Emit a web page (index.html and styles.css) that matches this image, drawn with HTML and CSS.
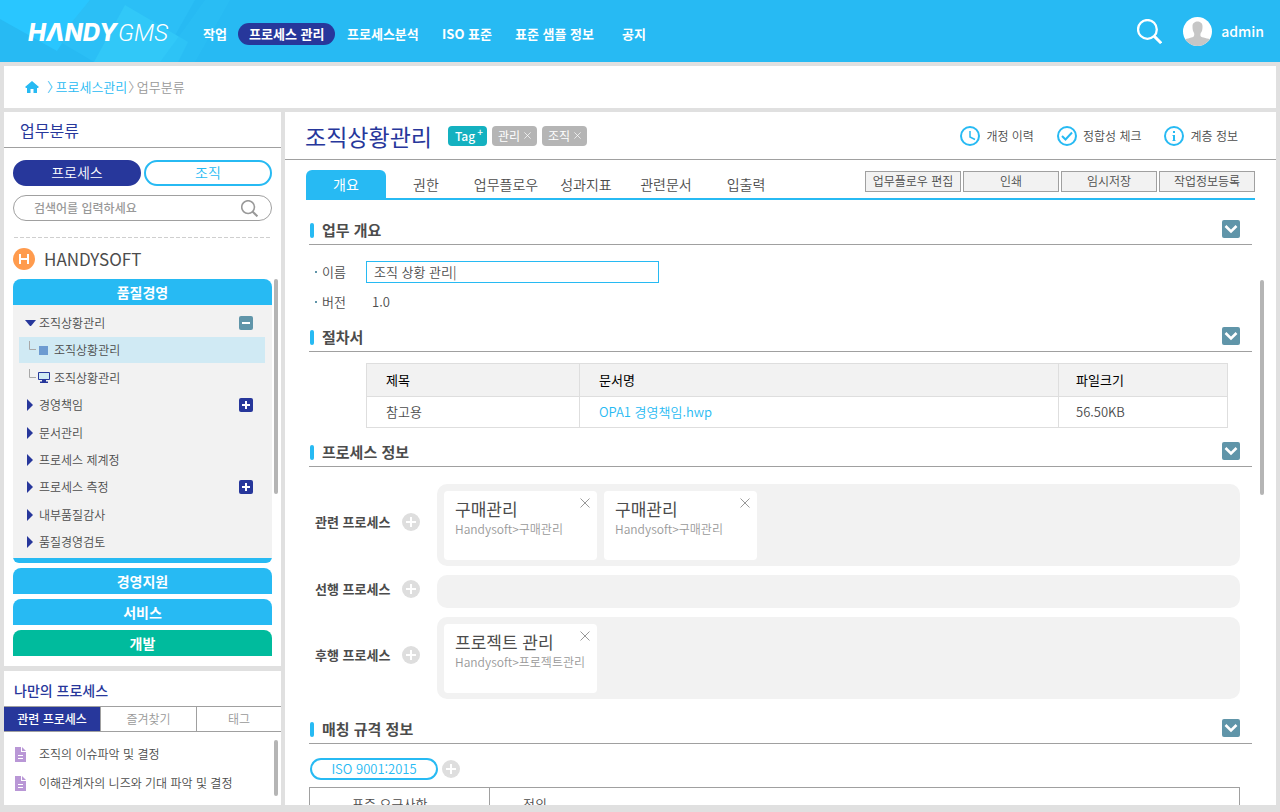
FILE: index.html
```html
<!DOCTYPE html>
<html lang="ko">
<head>
<meta charset="utf-8">
<title>HANDY GMS</title>
<link rel="stylesheet" href="styles.css">
</head>
<body>
<svg class="sprite" width="0" height="0" aria-hidden="true">
  <symbol id="chevron" viewBox="0 0 18 18"><path d="M3.500 6l5.500 5.500L14.500 6" fill="none" stroke="#fff" stroke-width="2.600"/></symbol>
  <symbol id="plus-round" viewBox="0 0 18 18"><circle cx="9" cy="9" r="9" fill="#dedede"/><path d="M9 4v10M4 9h10" stroke="#fff" stroke-width="2"/></symbol>
  <symbol id="cross" viewBox="0 0 10 10"><path d="M.5.5l9 9M9.5.5l-9 9" fill="none" stroke="currentColor"/></symbol>
  <symbol id="doc" viewBox="0 0 11 15"><path d="M0 0h6v5h5v10H0z" fill="#b997d6"/><path d="M7 0l4 4H7z" fill="#b997d6"/><path d="M3 8.500h5M3 11.500h5" stroke="#fff"/></symbol>
  <symbol id="search" viewBox="0 0 24 24"><circle cx="10" cy="10" r="9" fill="none" stroke="currentColor" stroke-width="2.200"/><path d="M16.200 16.200l7 7" stroke="currentColor" stroke-width="2.800"/></symbol>
  <symbol id="elbow" viewBox="0 0 8 10"><path d="M1.500 0v8.500H8" fill="none" stroke="#a8a8a8"/></symbol>
</svg>

<header class="topbar">
  <svg class="topbar-art" width="230" height="62" viewBox="0 0 230 62" aria-hidden="true">
    <path d="M0 0H90L57 51 0 19z" fill="#29c6ff"/>
    <path d="M90 0H195L160 62H94L57 40z" fill="#2bbff6"/>
    <path d="M125 5L188 42 178 62H94z" fill="#31c8f8"/>
    <path d="M188 24L205 0h25L195 62h-35z" fill="#2bc0f5" opacity=".6"/>
  </svg>
  <a class="logo" href="#" aria-label="HANDY GMS"><span class="logo-strong">HΛNDY</span><span class="logo-light">GMS</span></a>
  <nav class="mainnav">
    <a href="#">작업</a>
    <a href="#" class="current">프로세스 관리</a>
    <a href="#">프로세스분석</a>
    <a href="#">ISO 표준</a>
    <a href="#">표준 샘플 정보</a>
    <a href="#">공지</a>
  </nav>
  <div class="user">
    <button class="bare" aria-label="검색"><svg width="25" height="25"><use href="#search"/></svg></button>
    <svg width="29" height="29" viewBox="0 0 29 29" aria-hidden="true">
      <clipPath id="face"><circle cx="14.500" cy="14.500" r="14.500"/></clipPath>
      <circle cx="14.500" cy="14.500" r="14.500" fill="#fff"/>
      <g clip-path="url(#face)" fill="#c6c6c6"><path d="M9.500 9c0-6 10-6 10 0 0 2 0 4-1 6-1 1-1.200 2-1 4 1 2 8 2 11 4v8H1v-8c3-2 9-2 10-4 .5-2 .3-3-.5-4-1-2-1-4-1-6z"/></g>
    </svg>
    <span>admin</span>
  </div>
</header>

<div class="crumbs">
  <svg width="14" height="12" viewBox="0 0 14 12" aria-hidden="true"><path d="M7 0l7 6-1.200 1H12v5H8.500V8h-3v4H2V7h-.8L0 6z" fill="#27baf3"/></svg>
  <span class="sep sep-on">〉</span><a href="#">프로세스관리</a><span class="sep">〉</span><span>업무분류</span>
</div>

<div class="workspace">
  <aside class="side">
    <section class="panel tree-panel">
      <h2>업무분류</h2>
      <div class="tree-body">
        <div class="switch">
          <button class="pill pill-on">프로세스</button>
          <button class="pill">조직</button>
        </div>
        <label class="search">
          <input type="text" placeholder="검색어를 입력하세요" aria-label="검색어">
          <svg width="17" height="17" aria-hidden="true"><use href="#search"/></svg>
        </label>
        <svg class="dashes" height="1" aria-hidden="true"><path d="M1 .5H900" stroke="#cfcfcf" stroke-dasharray="4 2"/></svg>
        <div class="company">
          <svg width="22" height="22" viewBox="0 0 22 22" aria-hidden="true"><circle cx="11" cy="11" r="11" fill="#ff9b4d"/><path d="M7 6v10M15 6v10M7 11h8" stroke="#fff" stroke-width="2"/></svg>
          <span>HANDYSOFT</span>
        </div>
        <div class="accordion">
          <button class="bar">품질경영</button>
          <ul class="tree">
            <li><i class="down"></i><span>조직상황관리</span>
              <button class="mini muted" aria-label="접기"><svg width="14" height="14"><path d="M3 7h8" stroke="#fff" stroke-width="2"/></svg></button></li>
            <li class="child selected"><svg width="8" height="10"><use href="#elbow"/></svg><i class="square"></i><span>조직상황관리</span></li>
            <li class="child"><svg width="8" height="10"><use href="#elbow"/></svg><svg class="monitor" width="12" height="11" viewBox="0 0 12 11"><path d="M.5.5h11v7H.5z" fill="#d0eaf4" stroke="#27379b"/><path d="M4 8h4v1.500h2V11H2V9.500h2z" fill="#27379b"/></svg><span>조직상황관리</span></li>
            <li><i class="right"></i><span>경영책임</span>
              <button class="mini" aria-label="펼치기"><svg width="14" height="14"><path d="M3 7h8M7 3v8" stroke="#fff" stroke-width="2"/></svg></button></li>
            <li><i class="right"></i><span>문서관리</span></li>
            <li><i class="right"></i><span>프로세스 제계정</span></li>
            <li><i class="right"></i><span>프로세스 측정</span>
              <button class="mini" aria-label="펼치기"><svg width="14" height="14"><path d="M3 7h8M7 3v8" stroke="#fff" stroke-width="2"/></svg></button></li>
            <li><i class="right"></i><span>내부품질감사</span></li>
            <li><i class="right"></i><span>품질경영검토</span></li>
          </ul>
          <div class="thumb tree-thumb"></div>
        </div>
        <button class="bar">경영지원</button>
        <button class="bar">서비스</button>
        <button class="bar green">개발</button>
      </div>
    </section>

    <section class="panel my-panel">
      <h3>나만의 프로세스</h3>
      <div class="my-tabs">
        <button class="on">관련 프로세스</button>
        <button>즐겨찾기</button>
        <button>태그</button>
      </div>
      <ul class="docs">
        <li><svg width="11" height="15"><use href="#doc"/></svg><a href="#">조직의 이슈파악 및 결정</a></li>
        <li><svg width="11" height="15"><use href="#doc"/></svg><a href="#">이해관계자의 니즈와 기대 파악 및 결정</a></li>
      </ul>
      <div class="thumb my-thumb"></div>
    </section>
  </aside>

  <main class="panel content">
    <div class="title-row">
      <h1>조직상황관리</h1>
      <button class="tag tag-add">Tag<sup>+</sup></button>
      <button class="tag">관리<svg width="7" height="7"><use href="#cross"/></svg></button>
      <button class="tag">조직<svg width="7" height="7"><use href="#cross"/></svg></button>
      <div class="links">
        <a href="#"><svg width="20" height="20" fill="none" stroke="#27baf3" stroke-width="2"><circle cx="10" cy="10" r="9"/><path d="M10 5v6l5 2.500" stroke-width="1.500"/></svg>개정 이력</a>
        <a href="#"><svg width="20" height="20" fill="none" stroke="#27baf3" stroke-width="2"><circle cx="10" cy="10" r="9"/><path d="M5 10l3.500 3.500 6.500-7"/></svg>정합성 체크</a>
        <a href="#"><svg width="20" height="20" fill="none" stroke="#27baf3" stroke-width="2"><circle cx="10" cy="10" r="9"/><path d="M10 5v2M10 9v6" /><path d="M8.500 9.500H10M8.500 14.500h3" stroke-width="1"/></svg>계층 정보</a>
      </div>
    </div>

    <div class="tabs-row">
      <nav class="tabs">
        <a href="#" class="active">개요</a><a href="#">권한</a><a href="#">업무플로우</a><a href="#">성과지표</a><a href="#">관련문서</a><a href="#">입출력</a>
      </nav>
      <div class="actions">
        <button>업무플로우 편집</button><button>인쇄</button><button>임시저장</button><button>작업정보등록</button>
      </div>
    </div>

    <section class="block">
      <div class="block-head"><h2>업무 개요</h2><button class="toggle" aria-label="접기"><svg width="18" height="18"><use href="#chevron"/></svg></button></div>
      <div class="fields">
        <label for="name">이름</label><input id="name" type="text" value="조직 상황 관리|" spellcheck="false">
        <span class="label">버전</span><span class="value">1.0</span>
      </div>
    </section>

    <section class="block">
      <div class="block-head"><h2>절차서</h2><button class="toggle" aria-label="접기"><svg width="18" height="18"><use href="#chevron"/></svg></button></div>
      <div class="files-wrap">
        <table class="files">
          <thead><tr><th class="c-title">제목</th><th>문서명</th><th class="c-size">파일크기</th></tr></thead>
          <tbody><tr><td>참고용</td><td><a href="#">OPA1 경영책임.hwp</a></td><td>56.50KB</td></tr></tbody>
        </table>
      </div>
    </section>

    <section class="block">
      <div class="block-head"><h2>프로세스 정보</h2><button class="toggle" aria-label="접기"><svg width="18" height="18"><use href="#chevron"/></svg></button></div>
      <div class="relations">
        <div class="relation">
          <span class="rel-name">관련 프로세스</span>
          <button class="bare" aria-label="추가"><svg width="18" height="18"><use href="#plus-round"/></svg></button>
          <div class="tray">
            <div class="card"><strong>구매관리</strong><span>Handysoft&gt;구매관리</span><button class="bare close" aria-label="삭제"><svg width="10" height="10"><use href="#cross"/></svg></button></div>
            <div class="card"><strong>구매관리</strong><span>Handysoft&gt;구매관리</span><button class="bare close" aria-label="삭제"><svg width="10" height="10"><use href="#cross"/></svg></button></div>
          </div>
        </div>
        <div class="relation">
          <span class="rel-name">선행 프로세스</span>
          <button class="bare" aria-label="추가"><svg width="18" height="18"><use href="#plus-round"/></svg></button>
          <div class="tray"></div>
        </div>
        <div class="relation">
          <span class="rel-name">후행 프로세스</span>
          <button class="bare" aria-label="추가"><svg width="18" height="18"><use href="#plus-round"/></svg></button>
          <div class="tray">
            <div class="card"><strong>프로젝트 관리</strong><span>Handysoft&gt;프로젝트관리</span><button class="bare close" aria-label="삭제"><svg width="10" height="10"><use href="#cross"/></svg></button></div>
          </div>
        </div>
      </div>
    </section>

    <section class="block">
      <div class="block-head"><h2>매칭 규격 정보</h2><button class="toggle" aria-label="접기"><svg width="18" height="18"><use href="#chevron"/></svg></button></div>
      <div class="standards">
        <button class="standard">ISO 9001:2015</button>
        <button class="bare" aria-label="추가"><svg width="18" height="18"><use href="#plus-round"/></svg></button>
      </div>
      <table class="reqs"><tbody><tr><td class="c-req">표준 요구사항</td><td>정의</td></tr></tbody></table>
    </section>
    <div class="thumb main-thumb"></div>
  </main>
</div>
</body>
</html>
```

FILE: styles.css
```css
* { box-sizing: border-box; }

body {
  margin: 0;
  height: 100vh;
  display: flex;
  flex-direction: column;
  overflow: hidden;
  background: #e0e0e0;
  color: #4c4c4c;
  font: 350 13px/20px "Noto Sans CJK KR", sans-serif;
}

h1, h2, h3, ul { margin: 0; padding: 0; }
h1, h2 { font-weight: 400; }
ul { list-style: none; }
a { color: inherit; text-decoration: none; }
svg { display: block; flex: none; }
button, input { font: inherit; color: inherit; margin: 0; padding: 0; border: 0; background: none; outline: 0; }
i { flex: none; }
.sprite { position: absolute; }
.bare { display: block; }

/* Top bar */
.topbar {
  position: relative;
  flex: none;
  height: 62px;
  padding: 0 16px 0 28px;
  display: flex;
  align-items: center;
  background: #27baf3;
  color: #fff;
}
.topbar-art { position: absolute; left: 0; top: 0; }
.logo {
  position: relative;
  width: 175px;
  padding-top: 3px;
  display: flex;
  gap: 1px;
  font: italic 24px/28px Inter, sans-serif;
}
.logo-strong { font-weight: 800; }
.logo-light { font-family: Roboto, sans-serif; font-weight: 300; }
.mainnav {
  position: relative;
  display: grid;
  grid-template-columns: 35px 109px 95px 73px 107px auto;
  align-items: center;
  padding-top: 6px;
  font-size: 13px;
  font-weight: 700;
  line-height: 22px;
  white-space: nowrap;
}
.mainnav .current {
  justify-self: start;
  padding: 0 11px;
  border-radius: 11px;
  background: #27379b;
}
.user {
  margin-left: auto;
  display: flex;
  align-items: center;
  font-size: 14px;
  font-weight: 500;
}
.user svg { margin-right: 9px; }
.user button svg { margin-right: 21px; }

/* Breadcrumb */
.crumbs {
  flex: none;
  height: 42px;
  margin: 4px;
  padding-left: 21px;
  display: flex;
  align-items: center;
  background: #fff;
  color: #999;
}
.crumbs a, .crumbs .sep-on { color: #27baf3; }
.sep { margin: 0 2px 0 1px; font-feature-settings: "halt"; }
.sep-on { margin-left: 8px; }

/* Columns */
.workspace {
  flex: 1;
  min-height: 0;
  padding: 0 4px 7px;
  display: grid;
  grid-template-columns: 277px 1fr;
  gap: 4px;
}
.panel { position: relative; background: #fff; }
.side { display: flex; flex-direction: column; gap: 5px; min-height: 0; }
.thumb { position: absolute; width: 4px; border-radius: 2px; background: #b5b5b5; }

/* Category tree */
.tree-panel h2 {
  padding: 8px 16px 7px;
  border-bottom: 1px solid #a0a0a0;
  color: #27379b;
  font-size: 16px;
}
.tree-body { padding: 12px 9px 10px; }
.switch { display: grid; grid-template-columns: 1fr 1fr; gap: 3px; }
.pill {
  height: 26px;
  padding-bottom: 2px;
  border: 2px solid #27baf3;
  border-radius: 13px;
  color: #27baf3;
  font-size: 14px;
  line-height: 20px;
}
.pill-on { border-color: #27379b; background: #27379b; color: #fff; }
.search {
  height: 26px;
  margin: 9px 0 16px;
  padding: 0 13px 0 20px;
  display: flex;
  align-items: center;
  border: 1px solid #a0a0a0;
  border-radius: 13px;
  color: #999;
}
.search input { flex: 1; min-width: 0; font-size: 12px; font-weight: 500; }
.search input::placeholder { color: #999; opacity: 1; }
.dashes { width: 100%; }
.company {
  padding: 10px 0 9px;
  display: flex;
  align-items: center;
  gap: 9px;
  font-size: 17px;
  line-height: 22px;
  font-weight: 400;
}
.accordion { position: relative; border-bottom: 5px solid #27baf3; border-radius: 0 0 6px 6px; }
.bar {
  display: block;
  width: 100%;
  height: 26px;
  border-radius: 8px 8px 0 0;
  background: #27baf3;
  color: #fff;
  font-size: 14px;
  font-weight: 700;
}
.accordion ~ .bar { margin-top: 5px; }
.bar.green { background: #00bb9d; }
.tree {
  height: 253px;
  padding: 5px 7px 3px 6px;
  display: flex;
  flex-direction: column;
  justify-content: space-between;
  background: #f2f2f2;
}
.tree, .docs { font-size: 12px; }
.tree li {
  height: 26px;
  padding: 0 12px 0 6px;
  display: flex;
  align-items: center;
}
.tree li.child { padding-left: 9px; }
.tree .selected { background: #d0eaf4; }
.tree li > svg:first-child { margin-bottom: 8px; }
.down { width: 11px; margin-right: 3px; border: 5px solid transparent; border-top: 6px solid #27379b; border-bottom: 0; }
.right { width: 6px; margin: 0 6px 0 2px; border: 6px solid transparent; border-left: 6px solid #27379b; border-right: 0; }
.square { width: 9px; height: 9px; margin: 0 6px 0 3px; background: #6d9bd1; }
.monitor { margin: 0 4px 0 2px; }
.mini { margin-left: auto; border-radius: 2px; background: #27379b; }
.mini.muted { background: #6095a9; }
.tree-thumb { top: 0; right: -6px; height: 215px; }

/* My processes */
.my-panel { flex: 1; min-height: 134px; }
.my-panel h3 { padding: 9px 10px 6px; color: #27379b; font-size: 14px; font-weight: 500; }
.my-tabs {
  height: 26px;
  display: grid;
  grid-template-columns: 97px 96px 1fr;
  border: solid #a0a0a0;
  border-width: 1px 0;
  color: #999;
  font-size: 12px;
}
.my-tabs button { border-right: 1px solid #a0a0a0; }
.my-tabs button:last-child { border-right: 0; }
.my-tabs .on { background: #27379b; color: #fff; font-weight: 500; }
.docs { padding: 12px 11px; display: grid; gap: 9px; }
.docs li { display: flex; align-items: center; gap: 13px; white-space: nowrap; }
.my-thumb { right: 3px; top: 69px; height: 56px; }

/* Content */
.content { min-width: 0; overflow: hidden; }
.title-row {
  height: 48px;
  padding: 0 38px 0 20px;
  display: flex;
  align-items: center;
  border-bottom: 1px solid #a0a0a0;
}
h1 { margin-right: 16px; color: #27379b; font-size: 23px; line-height: 32px; }
.tag {
  height: 20px;
  margin-right: 5px;
  padding: 0 6px;
  display: flex;
  align-items: center;
  gap: 4px;
  border-radius: 4px;
  background: #b5b5b5;
  color: #fff;
  font-size: 12px;
  font-weight: 400;
}
.tag-add { gap: 2px; padding: 0 4px 0 7px; background: #14b1c0; font-weight: 500; }
.tag sup { padding-bottom: 8px; font-size: 10px; line-height: 10px; }
.links { margin-left: auto; display: flex; gap: 23px; font-size: 12px; }
.links a { display: flex; align-items: center; gap: 6px; }

.tabs-row {
  margin: 10px 21px 16px;
  display: flex;
  justify-content: space-between;
  border-bottom: 2px solid #27baf3;
}
.tabs { display: flex; font-size: 14px; line-height: 28px; text-align: center; }
.tabs a { width: 80px; }
.tabs .active { border-radius: 6px 6px 0 0; background: #27baf3; color: #fff; font-weight: 400; }
.actions { padding-top: 1px; display: flex; gap: 2px; }
.actions button {
  width: 96px;
  height: 21px;
  padding-bottom: 1px;
  border: 1px solid #a0a0a0;
  background: #f2f2f2;
  font-size: 12px;
  line-height: 18px;
}

.block { margin: 0 24px 10px; }
.block-head {
  height: 29px;
  padding: 0 12px 0 1px;
  display: flex;
  align-items: center;
  justify-content: space-between;
  border-bottom: 1px solid #a0a0a0;
}
.block-head h2 { display: flex; align-items: center; gap: 8px; font-size: 15px; font-weight: 700; }
.block-head h2::before { content: ""; width: 4px; height: 15px; border-radius: 2px; background: #27baf3; }
.toggle { margin-bottom: 2px; border-radius: 2px; background: #6095a9; }

.fields {
  padding: 16px 6px 0;
  display: grid;
  grid-template-columns: 51px 293px;
  grid-auto-rows: 22px;
  row-gap: 8px;
  align-items: center;
}
.fields label, .label { display: flex; align-items: center; gap: 5px; }
.fields label::before, .label::before { content: ""; width: 2px; height: 2px; background: #6095a9; }
.fields input { height: 22px; padding: 0 7px 2px; border: 1px solid #27baf3; }
.value { padding-left: 6px; }

.files-wrap { padding: 11px 24px 0 57px; }
.files { width: 100%; border-collapse: collapse; table-layout: fixed; }
.files th, .files td { padding: 0 19px; border: 1px solid #dedede; text-align: left; }
.files th { height: 33px; background: #f2f2f2; color: #000; font-weight: 400; }
.files td { height: 31px; }
.files th:last-child, .files td:last-child { padding-left: 17px; }
.files a { color: #27baf3; }
.c-title { width: 213px; }
.c-size { width: 169px; }

.relations { padding: 17px 12px 6px 6px; display: grid; gap: 9px; }
.relation { display: flex; align-items: center; }
.rel-name { width: 87px; padding-bottom: 6px; font-weight: 700; white-space: nowrap; }
.relation .bare { margin-bottom: 6px; }
.relation .close { margin: 0; }
.tray {
  flex: 1;
  min-height: 33px;
  margin-left: 17px;
  padding: 7px 7px 6px;
  display: flex;
  gap: 7px;
  border-radius: 10px;
  background: #f2f2f2;
}
.card {
  position: relative;
  width: 153px;
  height: 69px;
  padding: 6px 11px;
  display: flex;
  flex-direction: column;
  border-radius: 4px;
  background: #fff;
}
.card strong { font-size: 17px; font-weight: 400; line-height: 24px; }
.card span { color: #999; font-size: 12px; line-height: 16px; white-space: nowrap; }
.close { position: absolute; right: 7px; top: 7px; color: #999; }

.standards { padding: 14px 1px 7px; display: flex; align-items: center; gap: 4px; }
.standard {
  width: 128px;
  height: 22px;
  border: 2px solid #27baf3;
  border-radius: 11px;
  color: #27baf3;
  line-height: 18px;
}
.reqs { width: calc(100% - 12px); border-collapse: collapse; table-layout: fixed; }
.reqs td { height: 32px; padding: 0 33px; border: 1px solid #a0a0a0; }
.reqs .c-req { width: 180px; padding: 0 42px; white-space: nowrap; }
.main-thumb { right: 12px; top: 168px; height: 215px; }
```
